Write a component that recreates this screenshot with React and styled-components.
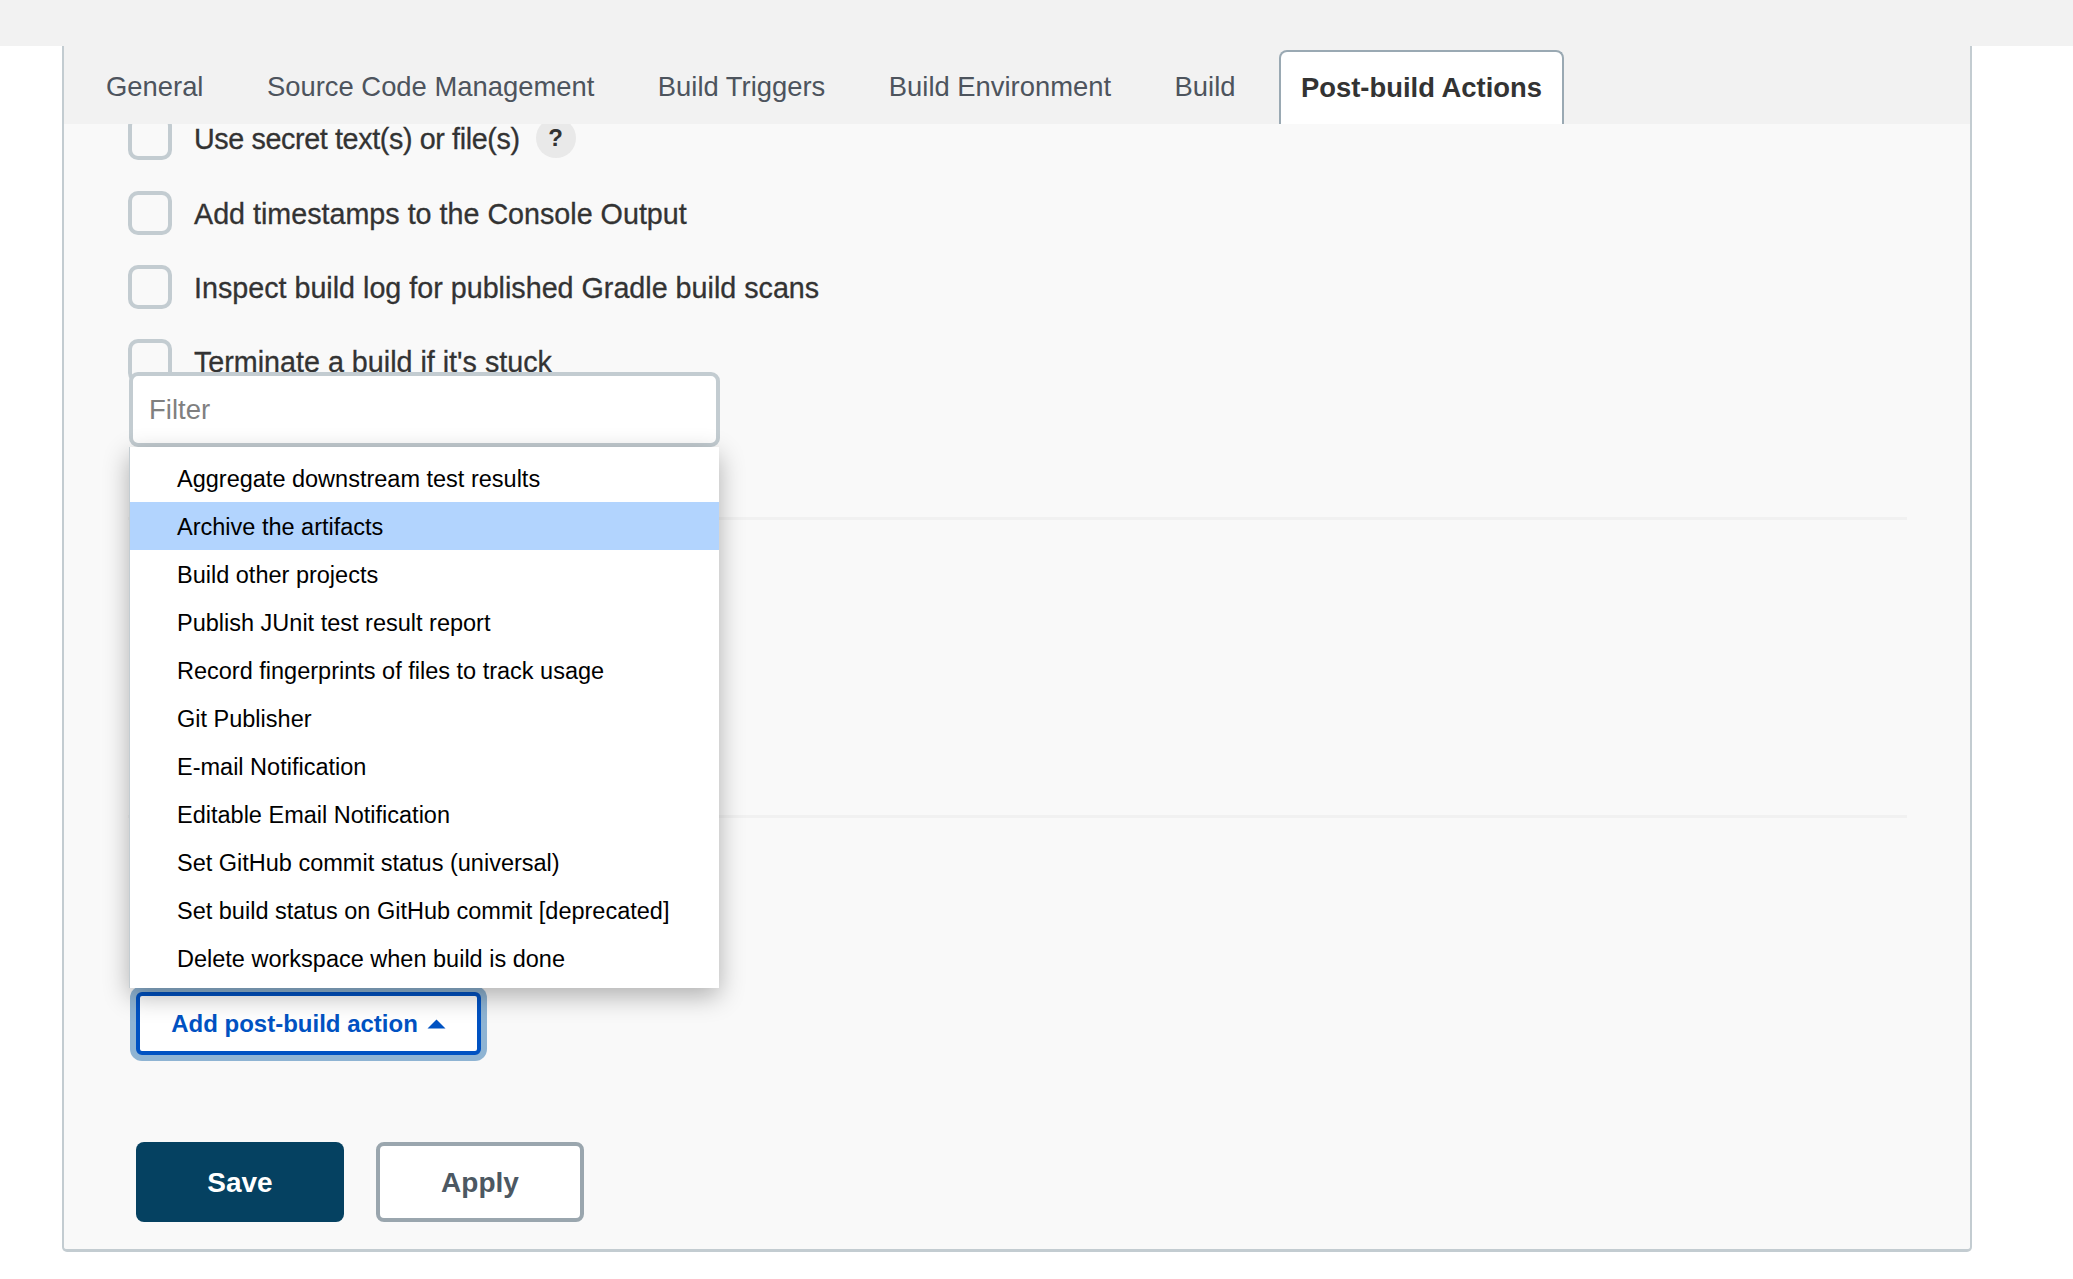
import React from "react";
import styled, { createGlobalStyle } from "styled-components";

const GlobalStyle = createGlobalStyle`
  html, body {
    margin: 0;
    padding: 0;
    background: #fff;
    font-family: "Liberation Sans", Arial, sans-serif;
  }
`;

const tabs = ["General", "Source Code Management", "Build Triggers", "Build Environment", "Build", "Post-build Actions"];

const options = [
  { label: "Use secret text(s) or file(s)", help: true },
  { label: "Add timestamps to the Console Output" },
  { label: "Inspect build log for published Gradle build scans" },
  { label: "Terminate a build if it's stuck" },
];

const menuItems = [
  "Aggregate downstream test results",
  "Archive the artifacts",
  "Build other projects",
  "Publish JUnit test result report",
  "Record fingerprints of files to track usage",
  "Git Publisher",
  "E-mail Notification",
  "Editable Email Notification",
  "Set GitHub commit status (universal)",
  "Set build status on GitHub commit [deprecated]",
  "Delete workspace when build is done",
];

const App = () => {
  return (
    <Page>
      <GlobalStyle />
      <TopBar />
      <Panel>
        <TabBar>
          {tabs.map((tab) => (
            <Tab key={tab} $active={tab === "Post-build Actions"}>
              {tab}
            </Tab>
          ))}
        </TabBar>
        <Body>
          <OptionList>
            {options.map((option) => (
              <OptionRow key={option.label}>
                <Checkbox />
                <OptionLabel $narrow={option.help}>{option.label}</OptionLabel>
                {option.help && <HelpBadge>?</HelpBadge>}
              </OptionRow>
            ))}
          </OptionList>
          <Divider $top={134} />
          <Divider $top={295} />
          <ActionArea>
            <Dropdown>
              <FilterInput placeholder="Filter" />
              <Menu>
                {menuItems.map((item) => (
                  <MenuItem key={item} $selected={item === "Archive the artifacts"}>
                    {item}
                  </MenuItem>
                ))}
              </Menu>
            </Dropdown>
            <AddButton>
              Add post-build action
              <svg width="19" height="10" viewBox="0 0 19 10" aria-hidden="true">
                <path d="M9.5 0.5 L18.5 9.5 L0.5 9.5 Z" fill="#0052c2" />
              </svg>
            </AddButton>
          </ActionArea>
          <FormButtons>
            <SaveButton>Save</SaveButton>
            <ApplyButton>Apply</ApplyButton>
          </FormButtons>
        </Body>
      </Panel>
    </Page>
  );
};

export default App;

const Page = styled.div`
  width: 2073px;
  height: 1279px;
  overflow: hidden;
  background: #fff;
`;

const TopBar = styled.div`
  height: 46px;
  background: #f2f2f2;
`;

const Panel = styled.div`
  box-sizing: border-box;
  width: 1910px;
  height: 1206px;
  margin-left: 62px;
  border: solid #c3ccd1;
  border-width: 0 2px 3px 2px;
  border-radius: 0 0 5px 5px;
  background: #f9f9f9;
  display: flex;
  flex-direction: column;
`;

const TabBar = styled.div`
  flex: none;
  height: 78px;
  box-sizing: border-box;
  padding: 4px 0 0 22px;
  display: flex;
  gap: 23.5px;
  background: #f2f2f2;
`;

const Tab = styled.div`
  box-sizing: border-box;
  height: 74px;
  padding: 0 20px;
  display: flex;
  align-items: center;
  font-size: 27.4px;
  color: ${(p) => (p.$active ? "#333" : "#4d545d")};
  font-weight: ${(p) => (p.$active ? 700 : 400)};
  background: ${(p) => (p.$active ? "#fff" : "transparent")};
  border: ${(p) => (p.$active ? "solid #9aa9b3" : "none")};
  border-width: 2px 2px 0 2px;
  border-radius: 8px 8px 0 0;
`;

const Body = styled.div`
  position: relative;
  flex: 1;
  min-height: 0;
  overflow: hidden;
  padding: 0 63px 0 64px;
`;

const OptionList = styled.div`
  margin-top: -8px;
  display: flex;
  flex-direction: column;
  gap: 30px;
`;

const OptionRow = styled.div`
  display: flex;
  align-items: center;
  height: 44px;

  &:first-child {
    margin-bottom: 1px;
  }
`;

const Checkbox = styled.div`
  box-sizing: border-box;
  width: 44px;
  height: 44px;
  border: 4px solid #c3ccd1;
  border-radius: 10px;
  background: #f9f9f9;
`;

const OptionLabel = styled.span`
  margin-left: 22px;
  padding-top: 2px;
  font-size: 28.7px;
  letter-spacing: ${(p) => (p.$narrow ? "-0.37px" : "0")};
  color: #333;
  -webkit-text-stroke: 0.3px #333;
`;

const HelpBadge = styled.span`
  width: 40px;
  height: 40px;
  margin-left: 16px;
  border-radius: 50%;
  background: #e9e9e9;
  color: #333;
  font-size: 24px;
  font-weight: 700;
  display: flex;
  align-items: center;
  justify-content: center;
`;

const Divider = styled.div`
  height: 3px;
  margin-top: ${(p) => p.$top}px;
  background: #f1f1f1;
`;

const ActionArea = styled.div`
  position: relative;
  width: 345px;
  margin: 174px 0 0 8px;
`;

const Dropdown = styled.div`
  position: absolute;
  z-index: 2;
  left: -7px;
  bottom: 67px;
  width: 591px;
`;

const FilterInput = styled.input`
  display: block;
  box-sizing: border-box;
  width: 100%;
  height: 75px;
  padding: 0 16px;
  border: 4px solid #c3ccd1;
  border-radius: 9px;
  outline: none;
  background: #fff;
  font-family: inherit;
  font-size: 27.5px;

  &::placeholder {
    color: #808080;
    opacity: 1;
  }
`;

const Menu = styled.div`
  margin-right: 1px;
  padding: 7px 0 6px;
  background: #fff;
  border-left: 1px solid #c3ccd1;
  box-shadow: 0 8px 24px rgba(0, 0, 0, 0.3);
`;

const MenuItem = styled.div`
  box-sizing: border-box;
  height: 48px;
  padding: 2px 0 0 47px;
  display: flex;
  align-items: center;
  font-size: 23.5px;
  color: #000;
  background: ${(p) => (p.$selected ? "#b2d4fe" : "transparent")};
`;

const AddButton = styled.button`
  box-sizing: border-box;
  width: 100%;
  height: 63px;
  padding: 0;
  display: flex;
  align-items: center;
  justify-content: center;
  gap: 9px;
  background: #fff;
  border: 4px solid #0052c2;
  border-radius: 6px;
  box-shadow: 0 0 0 6px #8fb4d3;
  font-family: inherit;
  font-size: 24px;
  font-weight: 700;
  color: #0052c2;
`;

const FormButtons = styled.div`
  margin: 87px 0 0 8px;
  display: flex;
  gap: 32px;
`;

const SaveButton = styled.button`
  box-sizing: border-box;
  width: 208px;
  height: 80px;
  padding-top: 2px;
  border: none;
  border-radius: 8px;
  background: #054161;
  color: #fff;
  font-family: inherit;
  font-size: 28px;
  font-weight: 700;
`;

const ApplyButton = styled(SaveButton)`
  border: 4px solid #9aa6ae;
  background: #fff;
  color: #4c5862;
`;
